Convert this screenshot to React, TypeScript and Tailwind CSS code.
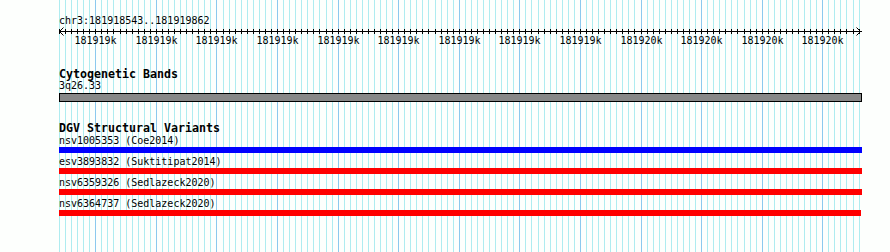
import React from "react";

const MINOR: number[] = [];
for (let j = -6; j <= 126; j++) MINOR.push(j);
const gx = (j: number) => Math.round(95.3 + 6.058 * j);

const LABELS = [
  "181919k","181919k","181919k","181919k","181919k","181919k","181919k","181919k","181919k",
  "181920k","181920k","181920k","181920k",
];

function Grid() {
  return (
    <svg className="absolute inset-0" width={890} height={252} shapeRendering="crispEdges">
      {MINOR.map((j) => (
        <rect key={j} x={gx(j)} y={0} width={1} height={252} fill={j % 10 === 0 ? "#8cc9ee" : "#aeecf0"} />
      ))}
    </svg>
  );
}

function Ruler() {
  return (
    <svg width={806} height={22} className="block font-['DejaVu_Sans_Mono',monospace] text-[10px]" shapeRendering="crispEdges">
      <rect x={0} y={5} width={803} height={1} fill="#000" />
      <polyline points="4.5,1.5 0.5,5.5 4.5,9.5" fill="none" stroke="#000" strokeWidth={1} shapeRendering="auto" />
      <polyline points="797.5,1.5 801.5,5.5 797.5,9.5" fill="none" stroke="#000" strokeWidth={1} shapeRendering="auto" />
      {MINOR.map((j) => (
        <rect key={j} x={gx(j) - 59} y={3} width={1} height={5} fill="#000" />
      ))}
      {LABELS.map((l, k) => (
        <text key={k} x={gx(k * 10) - 59 + 0.5} y={18} textAnchor="middle" fill="#000">
          {l}
        </text>
      ))}
    </svg>
  );
}

const rows = [
  { name: "nsv1005353 (Coe2014)", color: "bg-[#0000ff]", w: "w-[803px]" },
  { name: "esv3893832 (Suktitipat2014)", color: "bg-[#ff0000]", w: "w-[803px]" },
  { name: "nsv6359326 (Sedlazeck2020)", color: "bg-[#ff0000]", w: "w-[803px]" },
  { name: "nsv6364737 (Sedlazeck2020)", color: "bg-[#ff0000]", w: "w-[802px]" },
];

export default function App() {
  return (
    <div className="relative w-[890px] h-[252px] overflow-hidden bg-[#fdfffd] font-['DejaVu_Sans_Mono',monospace] text-black">
      <Grid />
      <div className="relative flex flex-col pl-[59px]">
        <div className="h-[16px]" />
        <div className="h-[10px] text-[10px] leading-[10px] whitespace-pre">chr3:181918543..181919862</div>
        <Ruler />
        <div className="mt-[20px] h-[12px] text-[11.63px] leading-[12px] font-bold whitespace-pre">Cytogenetic Bands</div>
        <div className="mt-[1px] h-[10px] text-[10px] leading-[10px] whitespace-pre">3q26.33</div>
        <div className="mt-[2px] h-[9px] w-[803px] bg-[#888888] border border-black" />
        <div className="mt-[20px] h-[12px] text-[11.63px] leading-[12px] font-bold whitespace-pre">DGV Structural Variants</div>
        <div className="mt-[2px] flex flex-col">
          {rows.map((r, i) => (
            <div key={i} className="flex flex-col h-[21px]">
              <div className="h-[10px] text-[10px] leading-[10px] whitespace-pre">{r.name}</div>
              <div className={`mt-[1px] h-[6px] ${r.w} ${r.color}`} />
            </div>
          ))}
        </div>
      </div>
    </div>
  );
}
